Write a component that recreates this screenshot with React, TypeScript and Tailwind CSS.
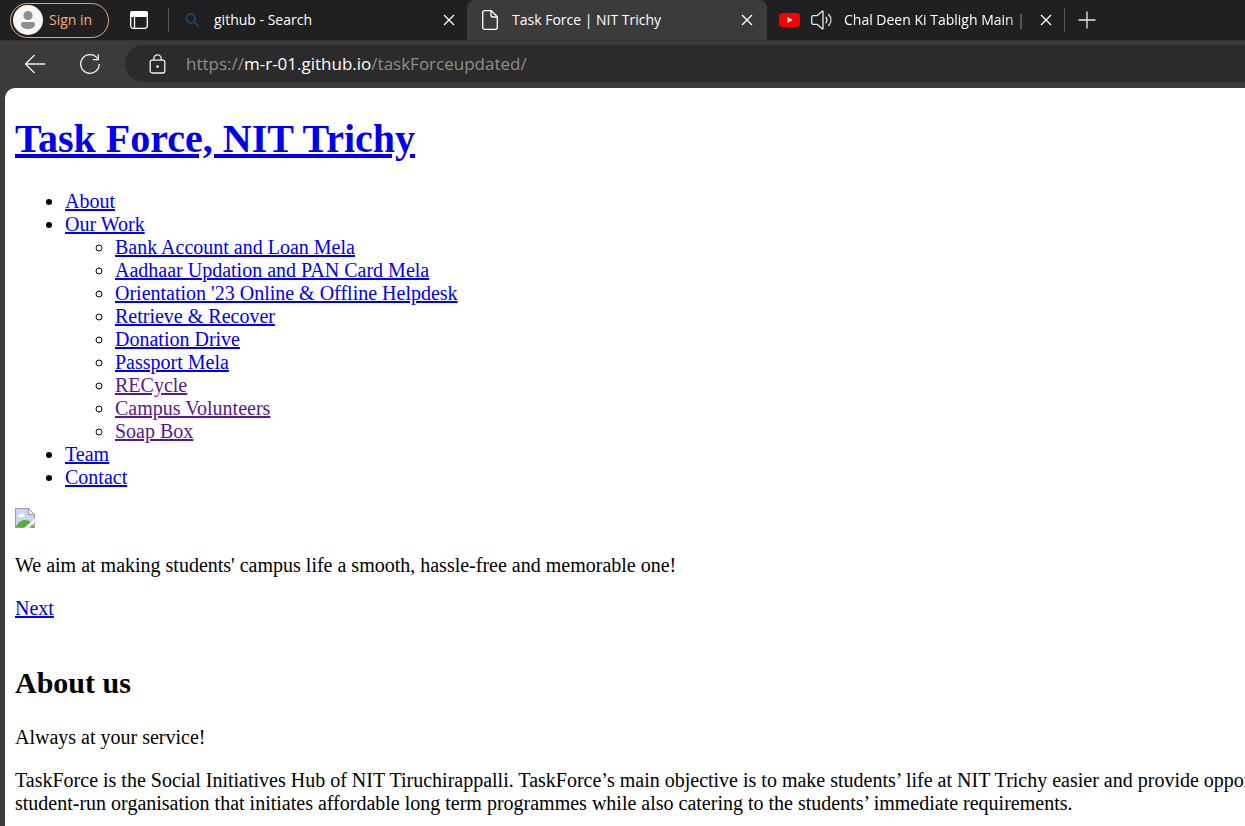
import type { ReactNode } from "react";

const subLinks = [
  { label: "Bank Account and Loan Mela", visited: false },
  { label: "Aadhaar Updation and PAN Card Mela", visited: false },
  { label: "Orientation '23 Online & Offline Helpdesk", visited: false },
  { label: "Retrieve & Recover", visited: false },
  { label: "Donation Drive", visited: false },
  { label: "Passport Mela", visited: false },
  { label: "RECycle", visited: true },
  { label: "Campus Volunteers", visited: true },
  { label: "Soap Box", visited: true },
];

function PageLink({ children, visited = false }: { children: ReactNode; visited?: boolean }) {
  return (
    <a href="#" className={visited ? "text-[#551a8b] underline" : "text-[#0000ee] underline"}>
      {children}
    </a>
  );
}

function CloseButton({ label }: { label: string }) {
  return (
    <button type="button" aria-label={label} className="flex size-6 shrink-0 items-center justify-center text-white">
      <svg width="12" height="12" viewBox="0 0 12 12" fill="none" stroke="currentColor" strokeWidth="1.3">
        <path d="M1 1l10 10M11 1L1 11" />
      </svg>
    </button>
  );
}

function TabStrip() {
  return (
    <div className="flex h-10 items-center bg-[#202020] text-sm text-white">
      <button
        type="button"
        className="ml-2.5 flex h-[35px] w-[99px] shrink-0 items-center gap-1.5 rounded-full border border-[#f0a46c] pl-0.5 text-[#f4ac78]"
      >
        <svg width="30" height="30" viewBox="0 0 30 30">
          <circle cx="15" cy="15" r="15" fill="#f7f7f7" />
          <circle cx="15" cy="10.5" r="4.6" fill="#8e8e8e" />
          <path d="M10 17h10a2 2 0 0 1 2 2c0 3.3-3 5-7 5s-7-1.7-7-5a2 2 0 0 1 2-2z" fill="#8e8e8e" />
        </svg>
        Sign in
      </button>
      <button type="button" aria-label="Tab actions" className="ml-5 shrink-0">
        <svg width="20" height="20" viewBox="0 0 20 20" fill="none" stroke="#fff" strokeWidth="1.3">
          <rect x="1.7" y="1.7" width="16.6" height="16.6" rx="2.5" />
          <path d="M2 2h16v4.3H2z" fill="#fff" />
          <path d="M5.5 6v12" />
        </svg>
      </button>
      <div className="ml-[19px] h-6 w-px shrink-0 bg-[#5a5a5a]" />
      <div className="flex h-10 w-[298px] shrink-0 items-center pr-1.5 pl-4">
        <svg width="14" height="14" viewBox="0 0 14 14" fill="none" stroke="#174a78" strokeWidth="1.8">
          <circle cx="5.8" cy="5.5" r="4.3" />
          <path d="M9 8.8L13 12.8" />
        </svg>
        <span className="ml-[15px] flex-1">github - Search</span>
        <CloseButton label="Close github - Search" />
      </div>
      <div className="flex h-10 w-[300px] shrink-0 items-center rounded-t-lg bg-[#3b3b3b] pr-2 pl-[15px]">
        <svg width="16" height="20" viewBox="0 0 16 20" fill="none" stroke="#fff" strokeWidth="1.3" strokeLinejoin="round">
          <path d="M2.7.7h6.6l6 6v10.6a2 2 0 0 1-2 2H2.7a2 2 0 0 1-2-2V2.7a2 2 0 0 1 2-2z" />
          <path d="M9 .7v4.3a2 2 0 0 0 2 2h4.3" />
        </svg>
        <span className="ml-3.5 flex-1">Task Force | NIT Trichy</span>
        <CloseButton label="Close Task Force" />
      </div>
      <div className="flex h-10 w-[297px] shrink-0 items-center pr-1.5 pl-3">
        <svg width="21" height="14" viewBox="0 0 21 14">
          <rect width="21" height="14" rx="3.5" fill="#f00" />
          <path d="M8.5 4l5 3-5 3z" fill="#fff" />
        </svg>
        <button type="button" aria-label="Mute tab" className="ml-[11px]">
          <svg width="21" height="20" viewBox="0 0 21 20" fill="none" stroke="#e8e8e8" strokeWidth="1.3" strokeLinejoin="round" strokeLinecap="round">
            <path d="M.7 7.2a1.5 1.5 0 0 1 1.5-1.5H6l5.2-4.5c.4-.3.8-.1.8.4v16.8c0 .5-.4.7-.8.4L6 14.3H2.2a1.5 1.5 0 0 1-1.5-1.5z" />
            <path d="M15 7.2c1.1 1.7 1.1 3.9 0 5.6M17.7 4.5c3 3.3 3 7.7 0 11" />
          </svg>
        </button>
        <span className="ml-3 flex-1 overflow-hidden whitespace-nowrap [mask-image:linear-gradient(to_right,black_85%,transparent)]">
          Chal Deen Ki Tabligh Main |
        </span>
        <CloseButton label="Close Chal Deen Ki Tabligh Main" />
      </div>
      <div className="h-6 w-px shrink-0 bg-[#5a5a5a]" />
      <button type="button" aria-label="New tab" className="ml-3 shrink-0">
        <svg width="20" height="20" viewBox="0 0 20 20" fill="none" stroke="#e8e8e8" strokeWidth="1.3">
          <path d="M10 1.5v17M1.5 10h17" />
        </svg>
      </button>
    </div>
  );
}

function Toolbar() {
  return (
    <div className="flex h-12 items-center border-t border-[#333] pb-0.5 text-white">
      <button type="button" aria-label="Back" className="ml-6">
        <svg width="22" height="20" viewBox="0 0 22 20" fill="none" stroke="#f2f2f2" strokeWidth="1.3">
          <path d="M10.5 1L1.5 10l9 9M1.5 10H21" />
        </svg>
      </button>
      <button type="button" aria-label="Refresh" className="ml-[33px]">
        <svg width="22" height="22" viewBox="0 0 22 22" fill="none" stroke="#f2f2f2" strokeWidth="1.3">
          <path d="M20.3 11A9.3 9.3 0 1 1 18.6 5.6" />
          <path d="M19.3 1.2v5.500h-5.500" />
        </svg>
      </button>
      <div className="ml-6 flex h-[37px] flex-1 items-center rounded-l-full bg-[#2b2b2b] pl-6">
        <svg width="17" height="20" viewBox="0 0 17 20" fill="none" stroke="#f2f2f2" strokeWidth="1.3">
          <rect x="1.2" y="6.2" width="14.6" height="12.8" rx="2" />
          <path d="M4.8 6V4.5a3.7 3.7 0 0 1 7.4 0V6" />
          <circle cx="8.5" cy="12.6" r="1.3" fill="#f2f2f2" stroke="none" />
        </svg>
        <a href="#" className="ml-5 text-[17px] leading-6 text-[#8f8f8f]">
          https://<span className="text-white">m-r-01.github.io</span>/taskForceupdated/
        </a>
      </div>
    </div>
  );
}

function BrokenImage() {
  return (
    <svg role="img" aria-label="Image unavailable" width="20" height="20" viewBox="0 0 20 20">
      <path d="M.5.5h13l6 6v13H.5z" fill="#c5d7f7" stroke="#9a9a9a" />
      <path d="M3 8a2 2 0 0 1 2-2 2.500 2.500 0 0 1 4.500 1A1.500 1.500 0 0 1 9 9H4a1 1 0 0 1-1-1z" fill="#fff" />
      <path d="M1 19c2-5 5-7 9-7 3 0 5 1 7 3l2 4z" fill="#5bab3c" />
      <path d="M13.5.5v6h6z" fill="#f3f3f3" stroke="#9a9a9a" />
      <path d="M20 10.500V14l-6 6H9z" fill="#fff" />
    </svg>
  );
}

export default function App() {
  return (
    <div className="flex h-screen flex-col overflow-hidden bg-[#3b3b3b]">
      <header className="shrink-0 font-['Open_Sans',sans-serif]">
        <TabStrip />
        <Toolbar />
      </header>
      <main className="ml-[5px] flex-1 overflow-hidden rounded-tl-[10px] bg-white pl-2.5 font-['Liberation_Serif',serif] text-xl leading-[23px] text-black">
        <h1 className="my-7 text-[40px] leading-[46px] font-bold">
          <PageLink>Task Force, NIT Trichy</PageLink>
        </h1>
        <ul className="mb-[19px] list-disc pl-[50px]">
          <li><PageLink>About</PageLink></li>
          <li>
            <PageLink>Our Work</PageLink>
            <ul className="list-[circle] pl-[50px]">
              {subLinks.map((link) => (
                <li key={link.label}><PageLink visited={link.visited}>{link.label}</PageLink></li>
              ))}
            </ul>
          </li>
          <li><PageLink>Team</PageLink></li>
          <li><PageLink>Contact</PageLink></li>
        </ul>
        <div className="h-[26px]"><BrokenImage /></div>
        <p className="my-5">We aim at making students' campus life a smooth, hassle-free and memorable one!</p>
        <PageLink>Next</PageLink>
        <h2 className="mt-[46px] mb-[26px] text-3xl leading-[34px] font-bold">About us</h2>
        <p className="my-5">Always at your service!</p>
        <p className="my-5 whitespace-nowrap">
          TaskForce is the Social Initiatives Hub of NIT Tiruchirappalli. TaskForce’s main objective is to make students’ life at NIT Trichy easier and provide oppor
          <br />
          student-run organisation that initiates affordable long term programmes while also catering to the students’ immediate requirements.
        </p>
      </main>
    </div>
  );
}
